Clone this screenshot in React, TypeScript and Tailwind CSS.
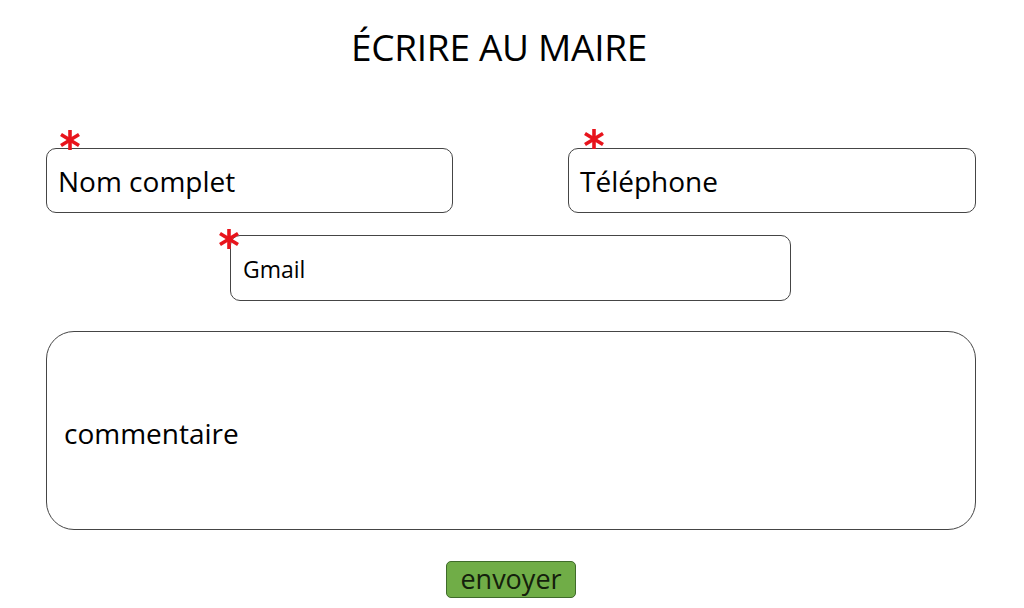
import React from "react";

function Star({ className }: { className: string }) {
  return (
    <svg className={className} width="24" height="22" viewBox="0 0 24 22" aria-hidden>
      <g stroke="#e8141c" strokeWidth="3.6" strokeLinecap="butt">
        <line x1="12" y1="1" x2="12" y2="21" />
        <line x1="3" y1="5.5" x2="21" y2="16.5" />
        <line x1="3" y1="16.5" x2="21" y2="5.5" />
      </g>
    </svg>
  );
}

export default function App() {
  return (
    <div
      className="w-[1024px] h-[608px] bg-white text-black overflow-hidden flex flex-col items-center"
      style={{ fontFamily: "'Open Sans', 'Noto Sans', sans-serif" }}
    >
      <h1 className="mt-[25px] ml-[-26px] text-[37px] leading-[44px] tracking-[-0.3px]">ÉCRIRE AU MAIRE</h1>

      <div className="mt-[79px] w-[930px] ml-[-2px] flex justify-between">
        <div className="relative w-[407px] h-[65px] border-[1.5px] border-[#454545] rounded-[10px] flex items-center pl-[11px]">
          <Star className="absolute left-[11px] top-[-20px]" />
          <span className="text-[28px] leading-none">Nom complet</span>
        </div>
        <div className="relative w-[408px] h-[65px] border-[1.5px] border-[#454545] rounded-[10px] flex items-center pl-[11px]">
          <Star className="absolute left-[13px] top-[-21px]" />
          <span className="text-[28px] leading-none">Téléphone</span>
        </div>
      </div>

      <div className="relative mt-[22px] ml-[-3px] w-[561px] h-[66px] border-[1.5px] border-[#454545] rounded-[10px] flex items-center pl-[12px] pt-[3px]">
        <Star className="absolute left-[-14px] top-[-8px]" />
        <span className="text-[23px] leading-none">Gmail</span>
      </div>

      <div className="mt-[30px] ml-[-2px] w-[930px] h-[199px] border-[1.5px] border-[#454545] rounded-[28px] flex items-center pl-[17px] pt-[5px]">
        <span className="text-[28px] leading-none">commentaire</span>
      </div>

      <button className="mt-[31px] ml-[-2px] w-[130px] h-[37px] bg-[#70ad47] border-[1.5px] border-[#3f6b2a] rounded-[5px] text-[27px] leading-none text-[#14200c] flex items-center justify-center pb-[3px]">
        envoyer
      </button>
    </div>
  );
}
